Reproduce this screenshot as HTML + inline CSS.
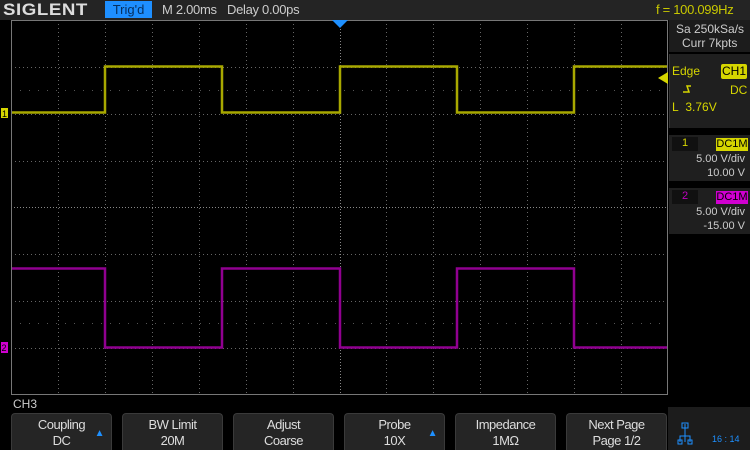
<!DOCTYPE html>
<html><head><meta charset="utf-8"><style>
body{margin:0;width:750px;height:450px;background:#000;overflow:hidden;font-family:"Liberation Sans",sans-serif;position:relative}
.a{position:absolute;white-space:nowrap}
.btn{position:absolute;top:413px;width:101px;height:37px;background:#252525;border:1px solid #3a3a3a;border-bottom:none;border-radius:4px 4px 0 0;color:#ddd;font-size:13px;line-height:16px;text-align:center;padding-top:3px;box-sizing:border-box;letter-spacing:-0.5px}
.up{position:absolute;right:7px;top:12px;color:#1e90ff;font-size:10px}
</style></head><body>
<div class="a" style="left:0;top:0;width:750px;height:20px;background:#242424"></div>
<div class="a" style="left:3px;top:0;font-size:17px;font-weight:bold;color:#ddd;letter-spacing:0.5px;line-height:20px;transform:scaleX(1.1);transform-origin:left">SIGLENT</div>
<div class="a" style="left:105px;top:1px;width:47px;height:17px;background:#1e8fff;color:#063060;font-size:13px;line-height:17px;text-align:center">Trig'd</div>
<div class="a" style="left:162px;top:2px;color:#ccc;font-size:13px;letter-spacing:-0.3px">M 2.00ms</div>
<div class="a" style="left:227px;top:2px;color:#ccc;font-size:13px;letter-spacing:-0.3px">Delay 0.00ps</div>
<div class="a" style="left:656px;top:2px;color:#c8c800;font-size:13px;letter-spacing:-0.3px">f = 100.099Hz</div>
<svg class="a" style="left:0;top:0" width="750" height="450">
<g stroke="#666" stroke-width="1" stroke-dasharray="1,3" fill="none">
<path d="M58.5 20V395M105.5 20V395M152.5 20V395M199.5 20V395M246.5 20V395M293.5 20V395M386.5 20V395M433.5 20V395M480.5 20V395M527.5 20V395M574.5 20V395M621.5 20V395"/>
<path d="M11 67.5H668M11 114.5H668M11 161.5H668M11 254.5H668M11 301.5H668M11 348.5H668"/>
</g>
<g stroke="#888" stroke-width="1" stroke-dasharray="1,2" fill="none"><path d="M340.5 20V395M11 207.5H668"/></g>
<g stroke="#555" stroke-width="1" stroke-dasharray="1,8" fill="none"><path d="M20 90.5H668M20 323.5H668"/></g>
<rect x="11.5" y="20.5" width="656" height="374" fill="none" stroke="#777"/>
<polyline points="12,112.5 105,112.5 105,66.5 222,66.5 222,112.5 340,112.5 340,66.5 457,66.5 457,112.5 574,112.5 574,66.5 667,66.5" fill="none" stroke="#a8a800" stroke-width="2.5"/>
<polyline points="12,268.5 105,268.5 105,347.5 222,347.5 222,268.5 340,268.5 340,347.5 457,347.5 457,268.5 574,268.5 574,347.5 667,347.5" fill="none" stroke="#900090" stroke-width="2.5"/>
<path d="M332 20H348L340 28Z" fill="#1e90ff"/>
<path d="M658 78L668 72V84Z" fill="#d6d600"/>
<rect x="1" y="108" width="7" height="10" fill="#d6d600"/><text x="2" y="117" font-size="9" fill="#000" font-family="Liberation Sans">1</text>
<rect x="1" y="342" width="7" height="11" fill="#d000d0"/><text x="1.5" y="351" font-size="9" fill="#000" font-family="Liberation Sans">2</text>
<path d="M685 442V430M680 442V436H690V442M685 424V430" stroke="#1e90ff" fill="none"/>
<rect x="682" y="423" width="6" height="5" fill="none" stroke="#1e90ff"/>
<rect x="678" y="440" width="4" height="4" fill="none" stroke="#1e90ff"/><rect x="688" y="440" width="4" height="4" fill="none" stroke="#1e90ff"/>
<path d="M683 92H689L687 86H691" stroke="#d6d600" fill="none" stroke-width="1.5"/>
</svg>
<div class="a" style="left:669px;top:20px;width:81px;height:32px;background:#1c1c1c"></div>
<div class="a" style="left:676px;top:22px;color:#ccc;font-size:12px">Sa 250kSa/s</div>
<div class="a" style="left:682px;top:36px;color:#ccc;font-size:12px">Curr 7kpts</div>
<div class="a" style="left:669px;top:54px;width:81px;height:74px;background:#1f1f1f;border-left:1px solid #333;z-index:-1"></div>
<div class="a" style="left:672px;top:64px;color:#d6d600;font-size:12px">Edge</div>
<div class="a" style="left:721px;top:64px;width:26px;height:15px;background:#d6d600;border-radius:2px;color:#000;font-size:12px;text-align:center;line-height:15px">CH1</div>
<div class="a" style="left:730px;top:83px;color:#d6d600;font-size:12px">DC</div>
<div class="a" style="left:672px;top:100px;color:#d6d600;font-size:12px">L&nbsp; 3.76V</div>
<div class="a" style="left:669px;top:135px;width:81px;height:46px;background:#1f1f1f"></div>
<div class="a" style="left:672px;top:137px;width:26px;height:14px;background:#111;color:#d6d600;font-size:11px;padding-left:10px;box-sizing:border-box">1</div>
<div class="a" style="left:716px;top:138px;width:32px;height:13px;background:#d6d600;color:#000;font-size:11px;text-align:center;line-height:13px">DC1M</div>
<div class="a" style="right:5px;top:153px;color:#ccc;font-size:11px">5.00 V/div</div>
<div class="a" style="right:5px;top:167px;color:#ccc;font-size:11px">10.00 V</div>
<div class="a" style="left:669px;top:188px;width:81px;height:46px;background:#1f1f1f"></div>
<div class="a" style="left:672px;top:190px;width:26px;height:14px;background:#111;color:#c000c0;font-size:11px;padding-left:10px;box-sizing:border-box">2</div>
<div class="a" style="left:716px;top:191px;width:32px;height:13px;background:#d000d0;color:#000;font-size:11px;text-align:center;line-height:13px">DC1M</div>
<div class="a" style="right:5px;top:206px;color:#ccc;font-size:11px">5.00 V/div</div>
<div class="a" style="right:5px;top:220px;color:#ccc;font-size:11px">-15.00 V</div>
<div class="a" style="left:13px;top:397px;color:#ccc;font-size:12px">CH3</div>
<div class="btn" style="left:11px">Coupling<br>DC<span class="up">▲</span></div>
<div class="btn" style="left:122px">BW Limit<br>20M</div>
<div class="btn" style="left:233px">Adjust<br>Coarse</div>
<div class="btn" style="left:344px">Probe<br>10X<span class="up">▲</span></div>
<div class="btn" style="left:455px">Impedance<br>1MΩ</div>
<div class="btn" style="left:566px">Next Page<br>Page 1/2</div>
<div class="a" style="left:668px;top:407px;width:82px;height:43px;background:#1c1c1c;z-index:-1"></div>
<div class="a" style="left:712px;top:434px;color:#1e90ff;font-size:9px">16 : 14</div>
</body></html>
